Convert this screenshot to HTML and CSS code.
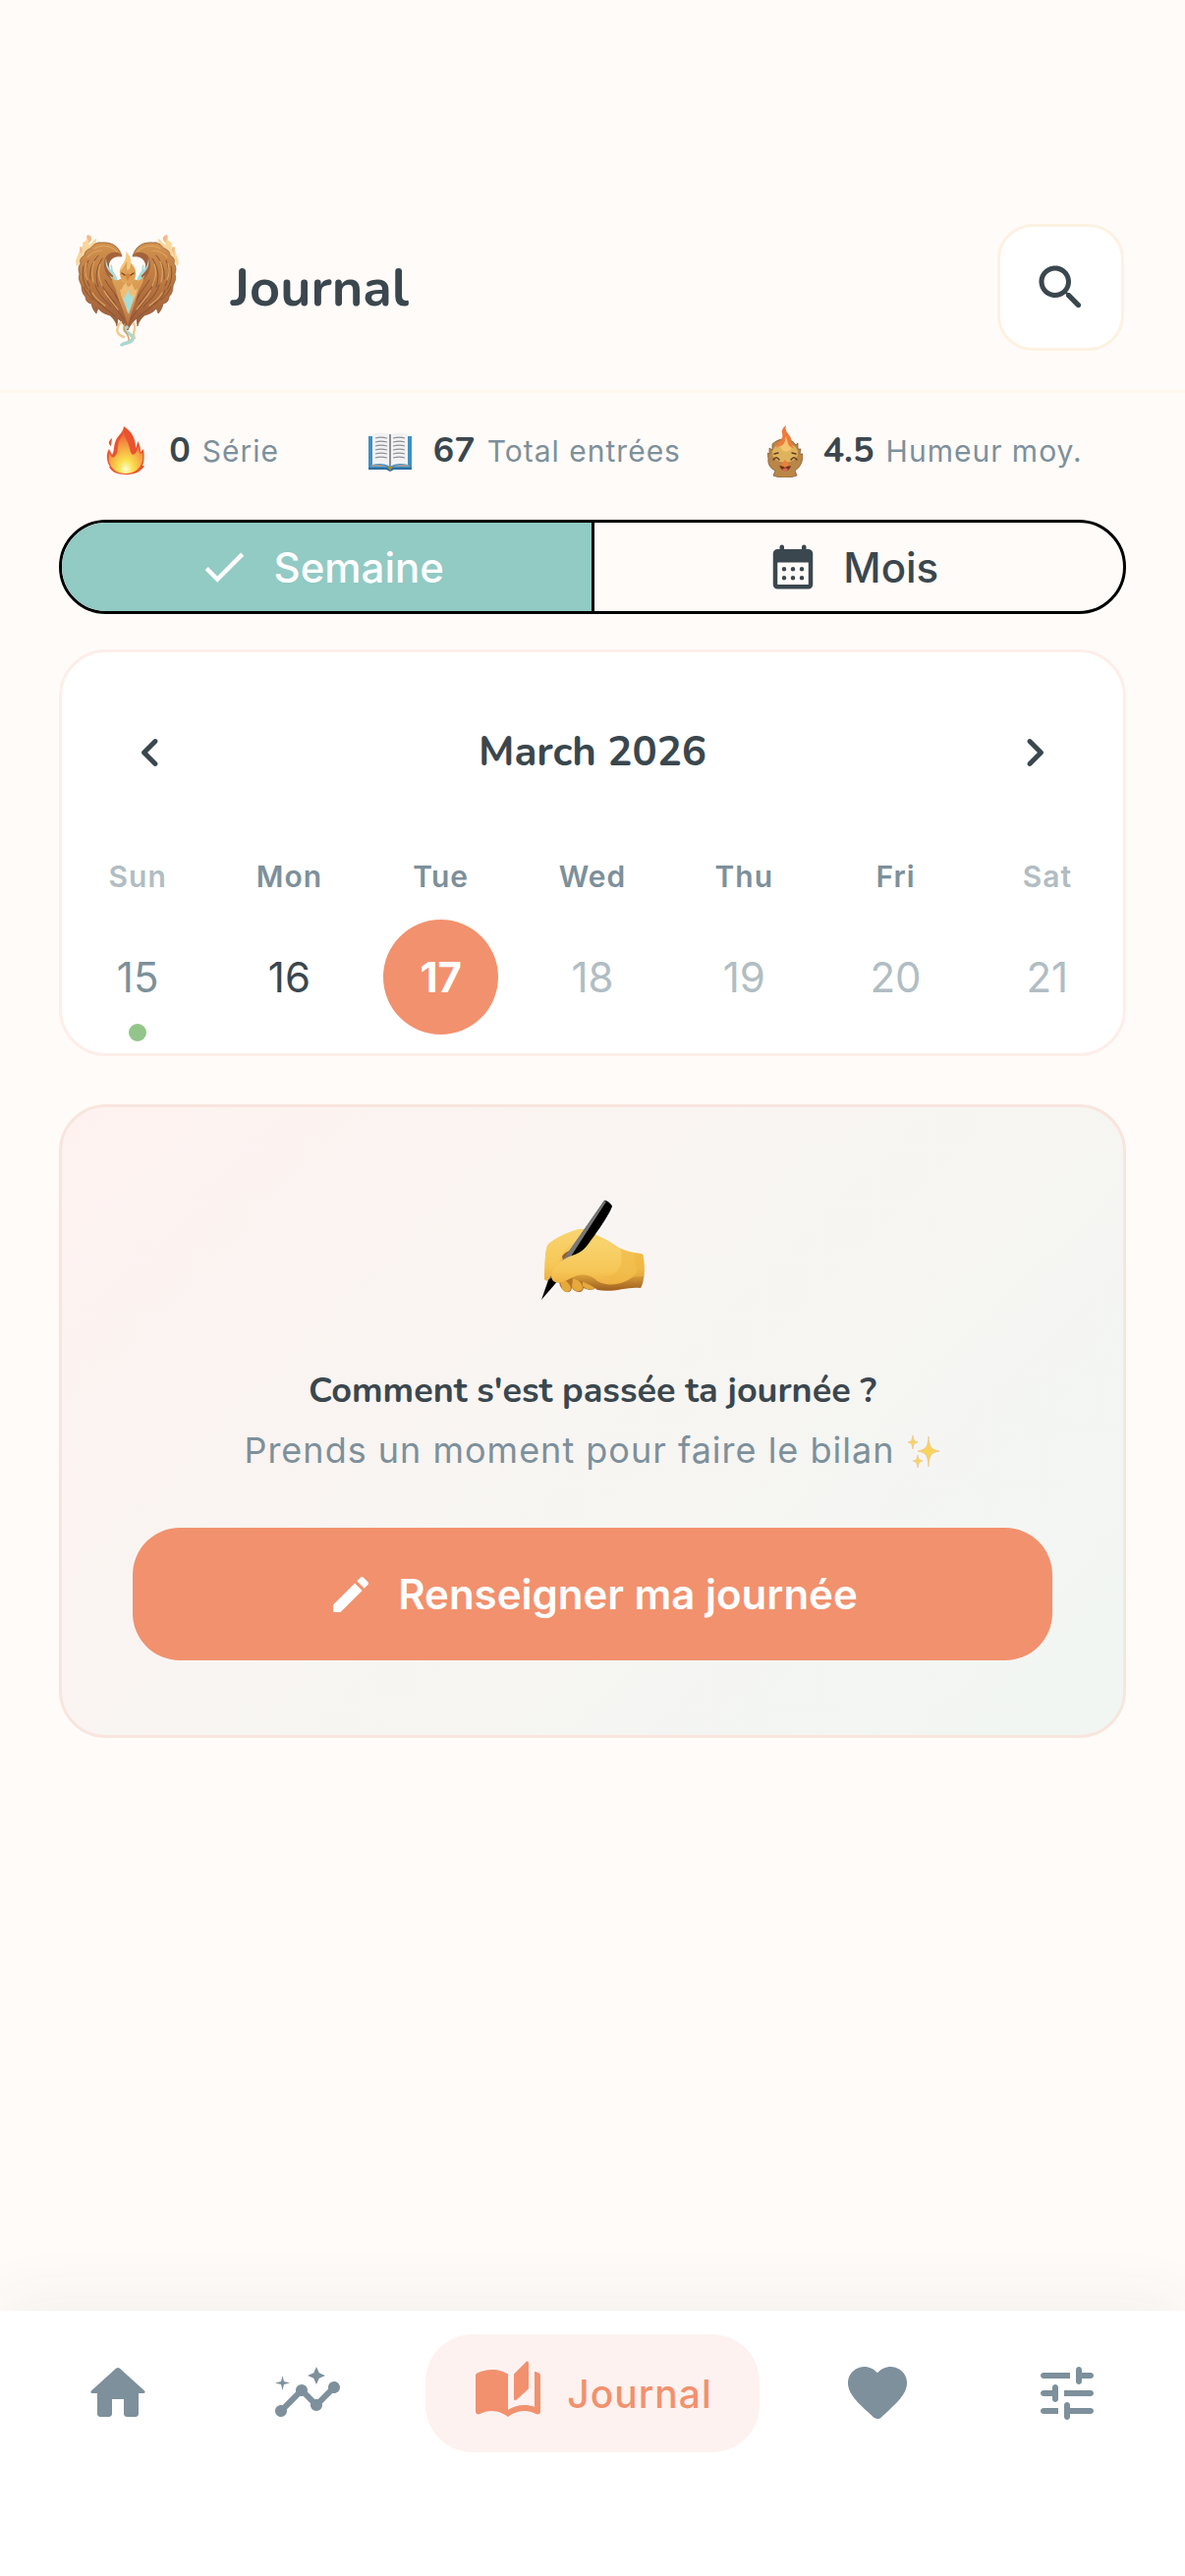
FILE: index.html
```html
<!DOCTYPE html>
<html lang="fr">
<head>
    <meta charset="UTF-8">
    <meta name="viewport" content="width=device-width, initial-scale=1.0">
    <title>Journal</title>
    <link rel="stylesheet" href="styles.css">
</head>
<body>
    <header class="header">
        <svg class="logo" viewBox="0 -6 105 121" aria-hidden="true">
            <defs>
                <linearGradient id="wingFill" x1="0" y1="0" x2="0" y2="1">
                    <stop offset="0" stop-color="#d2934f"/>
                    <stop offset="0.5" stop-color="#b9753f"/>
                    <stop offset="1" stop-color="#96583a"/>
                </linearGradient>
                <linearGradient id="bodyFill" x1="0" y1="0" x2="0" y2="1">
                    <stop offset="0" stop-color="#dca259"/>
                    <stop offset="0.6" stop-color="#d28f4e"/>
                    <stop offset="1" stop-color="#b06a3c"/>
                </linearGradient>
                <g id="wing">
                    <path fill="#f8d69c" d="M1 33C-2 25 5 21 4 13C6 15 8 13 7 9C10 8 12 6 11 2C17 5 14 9 13 11C17 10 18 6 21 5C22 11 16 13 13 17C8 20 6 27 3 31Z"/>
                    <path fill="#f2b98a" d="M12 1C18 2 17 7 13 9C14 5 10 4 12 1ZM5 13C8 15 7 19 4 21C6 18 3 16 5 13Z"/>
                    <path fill="url(#wingFill)" stroke="#885132" stroke-width="0.7" d="M47 23C44 12 36 8 26 9C22 8 18 11 15 15C11 16 9 19 9 22C5 24 4 27 5 30C2 34 3 38 4 41C2 46 5 50 6 53C6 59 8 62 10 64C10 68 13 71 16 71C17 76 19 79 21 81C22 79 22 77 23 76C26 80 31 82 35 83C38 86 41 89 42 94L43 86C46 89 50 93 52 98L54 84L50 66L43 50C37 46 33 40 32 33C32 27 37 22 47 23Z"/>
                    <path fill="#a3623a" d="M33 21C28 25 28 33 31 40C34 46 39 50 44 51L41 44C36 42 34 37 34 31C35 26 40 22 47 22C43 18 38 18 33 21Z"/>
                    <path fill="#a5dcd8" d="M31 25C29 32 33 38 38 42C39 46 36 44 34 42C37 47 40 49 43 52C43 46 41 42 38 38C37 35 38 33 36 31C35 34 36 36 36 37C33 34 31 30 31 25Z"/>
                    <g fill="none" stroke="#8b5232" stroke-width="1" stroke-linecap="round">
                        <path d="M23 22C16 30 14 38 15 46M27 25C20 36 20 45 23 54M8 33C6 42 8 51 12 56M13 27C8 38 11 47 14 53M14 57C16 64 20 68 25 72M20 52C23 62 30 68 36 74M25 49C29 58 36 64 41 72M30 47C35 56 42 62 46 71M8 54C10 60 14 64 18 67M23 69C28 76 34 78 40 84M33 66C39 73 44 80 49 87M40 62C45 70 50 79 53 88"/>
                    </g>
                    <g fill="none" stroke="#dba45f" stroke-width="1.2" stroke-linecap="round">
                        <path d="M19 15C24 11 35 11 42 18M12 24C16 19 21 17 27 17M11 30C9 38 10 43 12 47M19 28C15 37 17 45 18 49M25 31C22 40 24 46 27 53M17 60C21 67 26 70 30 73M29 58C33 66 39 71 43 77"/>
                    </g>
                </g>
            </defs>
            <use href="#wing"/>
            <use href="#wing" transform="translate(105 0) scale(-1 1)"/>
            <!-- body -->
            <path fill="url(#bodyFill)" d="M45 46C41 49 38 47 37 43C36 50 41 54 42 61C44 71 50 77 53 96C56 78 62 69 63 61C65 54 70 50 69 43C67 47 64 49 60 46Z"/>
            <path fill="#f0bd76" d="M45 56C48 60 46 52 52 50C51 55 56 55 57 50C60 56 60 60 63 55C62 65 56 72 53 80C50 70 46 65 45 56Z"/>
            <path fill="#a9ddd5" d="M48 65C50 67 51 60 54 57C54 63 57 66 58 61C60 68 56 74 54 82C52 78 51 73 48 65Z"/>
            <path fill="#f5c981" d="M45 41C44 35 47 32 49 29C51 25 52 22 51 18C55 22 57 26 56 29C59 32 62 36 61 42C60 48 57 50 53 50C49 50 46 48 45 41Z"/>
            <path fill="#dfa256" d="M45 38C49 35 50 31 52 28C53 32 51 35 53 37C56 36 56 32 56 30C59 34 62 37 61 42C60 48 57 50 53 50C49 50 45 47 45 38Z"/>
            <path fill="#d7873d" d="M50 42L53 48L56 42L53 40Z"/>
            <path fill="none" stroke="#6a3e26" stroke-width="1.3" stroke-linecap="round" d="M47 40L50 42M56 42L59 40"/>
            <!-- tail -->
            <path fill="none" stroke="#f1cb91" stroke-width="2.4" stroke-linecap="round" d="M46 90C39 98 43 103 49 105M59 91C63 98 56 101 60 106"/>
            <path fill="none" stroke="#a9d8cf" stroke-width="3.4" stroke-linecap="round" d="M52 95C44 100 60 101 58 107C56 112 51 110 47 113"/>
            <path fill="none" stroke="#d99a5d" stroke-width="1.4" stroke-linecap="round" d="M50 92C46 98 55 102 54 108"/>
        </svg>
        <h1 class="page-title">Journal</h1>
        <button class="search-button" type="button" aria-label="Rechercher">
            <svg class="icon-60" viewBox="0 0 24 24" aria-hidden="true"><path d="M15.5 14h-.79l-.28-.27c1.2-1.4 1.82-3.31 1.48-5.34-.47-2.78-2.79-5-5.59-5.34-4.23-.52-7.79 3.04-7.27 7.27.34 2.8 2.56 5.12 5.34 5.59 2.03.34 3.94-.28 5.34-1.48l.27.28v.79l4.25 4.25c.41.41 1.08.41 1.49 0 .41-.41.41-1.08 0-1.49L15.5 14zm-6 0C7.01 14 5 11.99 5 9.5S7.01 5 9.5 5 14 7.01 14 9.5 11.99 14 9.5 14z"/></svg>
        </button>
    </header>

    <main class="container">
        <!-- Statistics -->
        <div class="stats">
            <div class="stat">
                <svg class="stat-icon" viewBox="0 0 48 54" aria-hidden="true">
                    <defs>
                        <radialGradient id="flameFill" cx="0.5" cy="0.9" r="0.85">
                            <stop offset="0" stop-color="#fffbd0"/>
                            <stop offset="0.25" stop-color="#fbe04e"/>
                            <stop offset="0.6" stop-color="#f6a243"/>
                            <stop offset="1" stop-color="#ea5a35"/>
                        </radialGradient>
                    </defs>
                    <path fill="#e9532f" d="M22 2C30 7 34 14 34 24C35 22 36 19 36 17C39 21 39 26 39 28L42 25C43 32 43 37 41 42L43 42C39 49 32 51 24 51C15 51 9 48 7 43L8 43C4 37 4 29 7 25L10 31C13 26 11 23 14 16C16 11 21 9 22 2ZM10 14L9 22C6 20 6 17 10 14Z"/>
                    <path fill="url(#flameFill)" d="M22 5C21 12 27 17 28 25C29 30 31 32 33 30C36 28 36 24 37 22C37 28 38 31 41 29C43 38 38 50 24 50C10 50 5 39 7 29C9 33 11 36 14 31C17 26 15 22 17 17C19 13 22 11 22 5Z"/>
                </svg>
                <span class="stat-number">0</span>
                <span class="stat-label">Série</span>
            </div>
            <div class="stat">
                <svg class="stat-icon" viewBox="0 0 48 54" aria-hidden="true">
                    <path fill="#3f8fc4" d="M2 12H46V45H27L24 47L21 45H2Z"/>
                    <path fill="#2c6f9f" d="M2 44H46V46H28L24 48L20 46H2Z"/>
                    <path fill="#9a9a9c" d="M5 41C12 40 20 41 24 45C28 41 36 40 43 41V43H27L24 45L21 43H5Z"/>
                    <path fill="#f2f2f3" d="M6 10C12 8 20 8 24 11C28 8 36 8 42 10V41C35 39 28 40 24 43C20 40 12 39 6 41Z"/>
                    <path stroke="#8d8d92" stroke-width="2" d="M24 10V44"/>
                    <path fill="none" stroke="#8f8f98" stroke-width="1.2" d="M9 14C12 13 17 13 21 14M9 18C12 17 17 17 21 18M9 22C12 21 17 21 21 22M9 26C12 25 17 25 21 26M9 30C12 29 17 29 21 30M9 34C12 33 17 33 21 34M27 14C31 13 36 13 39 14M27 18C31 17 36 17 39 18M27 22C31 21 36 21 39 22M27 26C31 25 36 25 39 26M27 30C31 29 36 29 39 30M27 34C31 33 36 33 39 34"/>
                    <path fill="#a98a2e" d="M21 43H27L24 47Z"/>
                </svg>
                <span class="stat-number">67</span>
                <span class="stat-label">Total entrées</span>
            </div>
            <div class="stat">
                <svg class="mood-icon" viewBox="0 0 36 53" aria-hidden="true">
                    <path fill="#ba8647" stroke="#755034" stroke-width="0.7" d="M6 51L8 46C3 44 0 39 1 34L0 28L2 29L2 23L5 25L5 19C12 12 24 12 29 20L31 18L31 24L34 24L33 29L36 29C36 38 33 43 28 46L30 51C22 54 13 54 6 51Z"/>
                    <ellipse fill="#deb35d" cx="18" cy="28" rx="13" ry="10"/>
                    <path fill="#ed7b3e" d="M9 23C10 16 17 15 15 8C14 5 16 2 19 0C17 6 22 8 24 13C25 17 23 19 27 23C22 23 21 19 19 15C18 21 13 20 9 23Z"/>
                    <path fill="#f8c56e" d="M13 22C17 19 19 16 18 11C22 16 19 20 25 23C21 28 16 28 13 22Z"/>
                    <path fill="none" stroke="#5e3d25" stroke-width="1.4" stroke-linecap="round" d="M6 35C8 32 10 32 12 35M24 35C26 32 28 32 30 35M7 29L11 28M25 28L29 29"/>
                    <path fill="#71351f" d="M12 41C16 42 21 42 24 41C22 48 15 48 12 41Z"/>
                    <path fill="#ee7f3d" d="M14 40L18 35L22 40L18 43Z"/>
                    <path fill="#dd6952" d="M15 45C17 43 20 43 21 45L18 47Z"/>
                </svg>
                <span class="stat-number">4.5</span>
                <span class="stat-label">Humeur moy.</span>
            </div>
        </div>

        <!-- Period switch -->
        <div class="segmented" role="group" aria-label="Période">
            <button class="segment segment-active" type="button" aria-pressed="true">
                <svg class="icon-54" viewBox="0 0 24 24" aria-hidden="true"><path d="M9 16.17L4.83 12l-1.42 1.41L9 19 21 7l-1.41-1.41z"/></svg>
                Semaine
            </button>
            <button class="segment" type="button" aria-pressed="false">
                <svg class="icon-54" viewBox="0 0 24 24" aria-hidden="true"><path fill-rule="evenodd" d="M19 4h-1V3a1 1 0 0 0-2 0v1H8V3a1 1 0 0 0-2 0v1H5a2 2 0 0 0-2 2v14c0 1.1.9 2 2 2h14a2 2 0 0 0 2-2V6a2 2 0 0 0-2-2zm0 16H5V10h14zM8 12a1 1 0 1 0 0 2 1 1 0 0 0 0-2zm4 0a1 1 0 1 0 0 2 1 1 0 0 0 0-2zm4 0a1 1 0 1 0 0 2 1 1 0 0 0 0-2zM8 16a1 1 0 1 0 0 2 1 1 0 0 0 0-2zm4 0a1 1 0 1 0 0 2 1 1 0 0 0 0-2zm4 0a1 1 0 1 0 0 2 1 1 0 0 0 0-2z"/></svg>
                Mois
            </button>
        </div>

        <!-- Calendar -->
        <section class="calendar">
            <div class="calendar-header">
                <button class="chevron" type="button" aria-label="Semaine précédente">
                    <svg class="icon-60" viewBox="0 0 24 24" aria-hidden="true"><path d="M14.71 6.71c-.39-.39-1.02-.39-1.41 0L8.71 11.3c-.39.39-.39 1.02 0 1.41l4.59 4.59c.39.39 1.02.39 1.41 0 .39-.39.39-1.02 0-1.41L10.83 12l3.88-3.88c.39-.39.38-1.03 0-1.41z"/></svg>
                </button>
                <h2 class="calendar-title">March 2026</h2>
                <button class="chevron" type="button" aria-label="Semaine suivante">
                    <svg class="icon-60" viewBox="0 0 24 24" aria-hidden="true"><path d="M9.29 6.71c-.39.39-.39 1.02 0 1.41L13.17 12l-3.88 3.88c-.39.39-.39 1.02 0 1.41.39.39 1.02.39 1.41 0l4.59-4.59c.39-.39.39-1.02 0-1.41L10.7 6.7c-.38-.38-1.02-.38-1.41.01z"/></svg>
                </button>
            </div>
            <table class="week">
                <thead>
                    <tr>
                        <th class="weekend" scope="col">Sun</th>
                        <th scope="col">Mon</th>
                        <th scope="col">Tue</th>
                        <th scope="col">Wed</th>
                        <th scope="col">Thu</th>
                        <th scope="col">Fri</th>
                        <th class="weekend" scope="col">Sat</th>
                    </tr>
                </thead>
                <tbody>
                    <tr>
                        <td><button class="day day-past" type="button">15</button><span class="day-dot"></span></td>
                        <td><button class="day" type="button">16</button></td>
                        <td><button class="day day-selected" type="button" aria-current="date">17</button></td>
                        <td><button class="day" type="button" disabled>18</button></td>
                        <td><button class="day" type="button" disabled>19</button></td>
                        <td><button class="day" type="button" disabled>20</button></td>
                        <td><button class="day" type="button" disabled>21</button></td>
                    </tr>
                </tbody>
            </table>
        </section>

        <!-- Daily entry prompt -->
        <section class="prompt">
            <svg class="prompt-icon" viewBox="-1 0 108 104" aria-hidden="true">
                <defs>
                    <linearGradient id="handFill" x1="0" y1="0" x2="0" y2="1">
                        <stop offset="0" stop-color="#f9d56b"/>
                        <stop offset="0.65" stop-color="#efb843"/>
                        <stop offset="1" stop-color="#9e5f20"/>
                    </linearGradient>
                    <linearGradient id="fingerFill" x1="0" y1="0" x2="0" y2="1">
                        <stop offset="0" stop-color="#f9d470"/>
                        <stop offset="0.7" stop-color="#f6c757"/>
                        <stop offset="1" stop-color="#eeb040"/>
                    </linearGradient>
                </defs>
                <path fill="#b87427" d="M18 80L32 76L55 82L56 90C53 93 47 92 44 90C43 96 35 95 32 90C31 96 24 96 20 88Z"/>
                <path fill="#e5a93c" d="M20 82C26 81 30 86 31 90C30 95 25 95 22 91ZM33 80C38 80 43 86 43 90C41 95 35 94 32 89ZM43 79C50 79 55 86 55 90C52 93 46 91 43 88Z"/>
                <path fill="url(#handFill)" d="M4 80C5 68 4 57 7 47C9 42 32 31 41 30C49 29 55 35 61 38C74 43 81 53 95 54L103 55C107 60 107 82 102 90C89 88 75 95 58 92C49 85 42 83 31 80L20 82L11 70C10 76 10 82 7 82C5 82 4 81 4 80Z"/>
                <path fill="#9c5c25" d="M22 58C25 53 30 52 35 50L24 64Z"/>
                <path fill="url(#fingerFill)" d="M4 79C5 68 4 56 7 47C12 40 32 31 41 30L47 32C38 44 28 45 23 54C20 60 16 75 10 82C6 84 4 82 4 79Z"/>
                <path d="M65 1C67 0 73 5 73 7C70 16 53 40 45 50L14 87L1 102L8 82L25 59Z"/>
                <path fill="#777" d="M65 1L67 2L29 61L12 79L8 82L25 58Z"/>
                <path fill="url(#fingerFill)" d="M11 77C12 69 21 61 32 57C40 55 47 49 53 41L62 40C75 45 82 54 95 54L98 74C88 88 67 89 58 83C51 76 42 74 31 80C24 84 18 86 15 84C12 83 11 80 11 77Z"/>
                <path fill="#eeb744" opacity="0.6" d="M81 50C86 66 79 77 65 79C80 85 95 77 105 78V56L95 54Z"/>
            </svg>
            <h2 class="prompt-title">Comment s'est passée ta journée ?</h2>
            <p class="prompt-text">Prends un moment pour faire le bilan
                <svg class="sparkles" viewBox="0 0 36 36" aria-hidden="true">
                    <path fill="#f7d45e" stroke="#eec391" stroke-width="0.7" d="M23 3C24 14 25 16 34 18C25 20 24 22 23 34C22 22 21 20 12 18C21 16 22 14 23 3ZM7 2C8 7 8 8 12 9C8 10 8 11 7 16C6 11 6 10 2 9C6 8 6 7 7 2ZM12 22C13 26 13 27 17 28C13 29 13 30 12 35C11 30 11 29 7 28C11 27 11 26 12 22Z"/>
                </svg>
            </p>
            <button class="prompt-button" type="button">
                <svg class="icon-48" viewBox="0 0 24 24" aria-hidden="true"><path d="M3 17.46v3.04c0 .28.22.5.5.5h3.04c.13 0 .26-.05.35-.15L17.81 9.94l-3.75-3.75L3.15 17.1c-.1.1-.15.22-.15.36zM20.71 7.04c.39-.39.39-1.02 0-1.41l-2.34-2.34c-.39-.39-1.02-.39-1.41 0l-1.83 1.83 3.75 3.75 1.83-1.83z"/></svg>
                Renseigner ma journée
            </button>
        </section>
    </main>

    <nav class="navbar" aria-label="Navigation principale">
        <a class="nav-item" href="#accueil" aria-label="Accueil">
            <svg class="icon-72" viewBox="0 0 24 24" aria-hidden="true"><path d="M10 19v-5h4v5c0 .55.45 1 1 1h3c.55 0 1-.45 1-1v-7h1.7c.46 0 .68-.57.33-.87L12.67 3.6c-.38-.34-.96-.34-1.34 0l-8.36 7.53c-.34.3-.13.87.33.87H5v7c0 .55.45 1 1 1h3c.55 0 1-.45 1-1z"/></svg>
        </a>
        <a class="nav-item" href="#analyses" aria-label="Analyses">
            <svg class="icon-72" viewBox="0 0 24 24" aria-hidden="true"><path d="M21 8c-1.45 0-2.26 1.44-1.93 2.51l-3.55 3.56c-.3-.09-.74-.09-1.04 0l-2.55-2.55C12.27 10.45 11.46 9 10 9c-1.45 0-2.27 1.44-1.93 2.52l-4.56 4.55C2.44 15.74 1 16.55 1 18c0 1.1.9 2 2 2 1.45 0 2.26-1.44 1.93-2.51l4.55-4.56c.3.09.74.09 1.04 0l2.55 2.55C12.73 16.55 13.54 18 15 18c1.45 0 2.27-1.44 1.93-2.52l3.56-3.55C21.56 12.26 23 11.45 23 10c0-1.1-.9-2-2-2z"/><path d="M15 9l.94-2.07L18 6l-2.06-.93L15 3l-.92 2.07L12 6l2.08.93zM3.5 11L4 9l2-.5L4 8l-.5-2L3 8l-2 .5L3 9z"/></svg>
        </a>
        <a class="nav-item nav-active" href="#journal" aria-current="page">
            <svg class="icon-72" viewBox="0 0 24 24" aria-hidden="true"><path d="M18.15 1.35l-4 4c-.1.1-.15.22-.15.36v8.17c0 .43.51.66.83.37l4-3.6c.11-.09.17-.22.17-.36V1.71c0-.45-.54-.67-.85-.36zM22.47 5.2c-.47-.24-.96-.44-1.47-.61v12.03c-1.14-.41-2.31-.62-3.5-.62-1.9 0-3.78.54-5.5 1.58V5.48C10.38 4.55 8.51 4 6.5 4c-1.79 0-3.48.44-4.97 1.2-.33.16-.53.51-.53.88v12.08c0 .76.81 1.23 1.48.87C3.69 18.4 5.05 18 6.5 18c2.07 0 3.98.82 5.5 2 1.52-1.18 3.43-2 5.5-2 1.45 0 2.81.4 4.02 1.04.67.36 1.48-.11 1.48-.87V6.08c0-.37-.2-.72-.53-.88z"/></svg>
            Journal
        </a>
        <a class="nav-item" href="#favoris" aria-label="Favoris">
            <svg class="icon-72" viewBox="0 0 24 24" aria-hidden="true"><path d="M13.35 20.13c-.76.69-1.93.69-2.69-.01l-.11-.1C5.3 15.27 1.87 12.16 2 8.28c.06-1.7.93-3.33 2.34-4.29 2.64-1.8 5.9-.96 7.66 1.1 1.76-2.06 5.02-2.91 7.66-1.1 1.41.96 2.28 2.59 2.34 4.29.14 3.88-3.3 6.99-8.55 11.76l-.1.09z"/></svg>
        </a>
        <a class="nav-item" href="#reglages" aria-label="Réglages">
            <svg class="icon-72" viewBox="0 0 24 24" aria-hidden="true"><path d="M3 18c0 .55.45 1 1 1h5v-2H4c-.55 0-1 .45-1 1zM3 6c0 .55.45 1 1 1h9V5H4c-.55 0-1 .45-1 1zm10 14v-1h7c.55 0 1-.45 1-1s-.45-1-1-1h-7v-1c0-.55-.45-1-1-1s-1 .45-1 1v4c0 .55.45 1 1 1s1-.45 1-1zM7 10v1H4c-.55 0-1 .45-1 1s.45 1 1 1h3v1c0 .55.45 1 1 1s1-.45 1-1v-4c0-.55-.45-1-1-1s-1 .45-1 1zm14 2c0-.55-.45-1-1-1h-9v2h9c.55 0 1-.45 1-1zm-5-3c.55 0 1-.45 1-1V7h3c.55 0 1-.45 1-1s-.45-1-1-1h-3V4c0-.55-.45-1-1-1s-1 .45-1 1v4c0 .55.45 1 1 1z"/></svg>
        </a>
    </nav>
</body>
</html>
```

FILE: styles.css
```css
:root {
    --coral: #f2916e;
    --coral-light: #fdf2f0;
    --teal: #92cac4;
    --text-dark: #3a474e;
    --text-light: #7d909b;
    --text-muted: #b1bdc3;
    --background: #fffbf8;
    --white: #ffffff;
    --font-text: Inter, Roboto, sans-serif;
    --font-title: Nunito, "Open Sans", "Noto Sans", sans-serif;
}

* {
    margin: 0;
    padding: 0;
    box-sizing: border-box;
}

body {
    display: flex;
    flex-direction: column;
    min-height: 100vh;
    padding-top: 186px;
    background: var(--background);
    color: var(--text-dark);
    font-family: var(--font-text);
}

button {
    background: none;
    border: none;
    color: inherit;
    font-family: inherit;
    cursor: pointer;
}

svg {
    flex: none;
    display: block;
}

.icon-48,
.icon-54,
.icon-60,
.icon-72 {
    fill: currentColor;
}

.icon-48 {
    width: 48px;
    height: 48px;
}

.icon-54 {
    width: 54px;
    height: 54px;
}

.icon-60 {
    width: 60px;
    height: 60px;
}

.icon-72 {
    width: 72px;
    height: 72px;
}

/* Header */
.header {
    display: flex;
    align-items: center;
    padding: 42px 62px 40px 77px;
    border-bottom: 3px solid #fff7ec;
}

.logo {
    width: 105px;
    height: 121px;
    margin-right: 53px;
}

.page-title {
    flex: 1;
    font-family: var(--font-title);
    font-size: 54px;
    font-weight: 700;
    line-height: 72px;
}

.search-button {
    display: flex;
    align-items: center;
    justify-content: center;
    width: 129px;
    height: 129px;
    background: var(--white);
    border: 3px solid #fdf2e2;
    border-radius: 36px;
}

.container {
    padding: 0 60px;
}

/* Statistics */
.stats {
    display: flex;
    justify-content: space-around;
    padding: 30px 0 41px;
}

.stat {
    display: flex;
    align-items: center;
    height: 58px;
}

.stat-icon {
    width: 48px;
    height: 54px;
    margin-right: 20px;
}

.mood-icon {
    width: 36px;
    height: 53px;
    margin-right: 20px;
}

.stat-number {
    margin-right: 12px;
    font-family: var(--font-title);
    font-size: 36px;
    font-weight: 700;
    line-height: 48px;
}

.stat-label {
    color: var(--text-light);
    font-size: 30px;
    letter-spacing: 1px;
}

/* Period switch */
.segmented {
    display: flex;
    height: 96px;
    margin-bottom: 36px;
    border: 3px solid #000;
    border-radius: 48px;
    overflow: hidden;
}

.segment {
    display: flex;
    flex: 1;
    align-items: center;
    justify-content: center;
    gap: 24px;
    padding: 0 12px 0 0;
    font-size: 42px;
    font-weight: 500;
}

.segment + .segment {
    border-left: 3px solid #000;
}

.segment-active {
    background: var(--teal);
    color: var(--white);
}

/* Calendar */
.calendar {
    margin-bottom: 49px;
    background: var(--white);
    border: 3px solid #fdeeea;
    border-radius: 48px;
}

.calendar-header {
    display: flex;
    align-items: center;
    justify-content: space-between;
    padding: 72px 60px;
}

.calendar-title {
    font-family: var(--font-title);
    font-size: 42px;
    font-weight: 700;
    line-height: 60px;
}

.week {
    width: 100%;
    table-layout: fixed;
    border-collapse: collapse;
}

.week th {
    height: 48px;
    color: var(--text-light);
    font-size: 30px;
    font-weight: 600;
    letter-spacing: 1px;
    text-align: center;
}

.week .weekend {
    color: var(--text-muted);
}

.week td {
    position: relative;
    height: 156px;
    text-align: center;
    vertical-align: middle;
}

.day {
    display: block;
    width: 117px;
    height: 117px;
    margin: 0 auto;
    border-radius: 50%;
    font-size: 42px;
}

.day:disabled {
    color: var(--text-muted);
}

.day-past {
    color: var(--text-light);
}

.day-selected {
    background: var(--coral);
    color: var(--white);
    font-weight: 700;
}

.day-dot {
    position: absolute;
    bottom: 12px;
    left: 50%;
    width: 18px;
    height: 18px;
    margin-left: -9px;
    background: #92c58a;
    border-radius: 50%;
}

/* Daily entry prompt */
.prompt {
    display: flex;
    flex-direction: column;
    align-items: center;
    padding: 94px 72px 76px;
    background: linear-gradient(135deg, #fef2f0, #f8f5f2 45%, #f1f6f3);
    border: 3px solid #f8e5de;
    border-radius: 48px;
    text-align: center;
}

.prompt-icon {
    width: 108px;
    height: 104px;
    margin-bottom: 64px;
}

.prompt-title {
    margin-bottom: 6px;
    font-family: var(--font-title);
    font-size: 36px;
    font-weight: 700;
    line-height: 54px;
}

.prompt-text {
    margin-bottom: 52px;
    color: var(--text-light);
    font-size: 36px;
    letter-spacing: 1px;
    line-height: 54px;
}

.sparkles {
    display: inline-block;
    width: 36px;
    height: 36px;
    vertical-align: -6px;
}

.prompt-button {
    display: flex;
    align-items: center;
    justify-content: center;
    gap: 24px;
    width: 100%;
    height: 135px;
    background: var(--coral);
    border-radius: 48px;
    color: var(--white);
    font-size: 42px;
    font-weight: 600;
}

/* Bottom navigation */
.navbar {
    display: flex;
    justify-content: space-between;
    margin-top: auto;
    padding: 24px 48px 126px;
    background: var(--white);
    box-shadow: 0 -12px 60px rgba(58, 71, 78, 0.06);
}

.nav-item {
    display: flex;
    align-items: center;
    gap: 24px;
    height: 120px;
    padding: 0 36px;
    border-radius: 48px;
    color: var(--text-light);
    font-size: 39px;
    font-weight: 500;
    letter-spacing: 1px;
    text-decoration: none;
}

.nav-active {
    padding: 0 48px;
    background: var(--coral-light);
    color: var(--coral);
}
```
